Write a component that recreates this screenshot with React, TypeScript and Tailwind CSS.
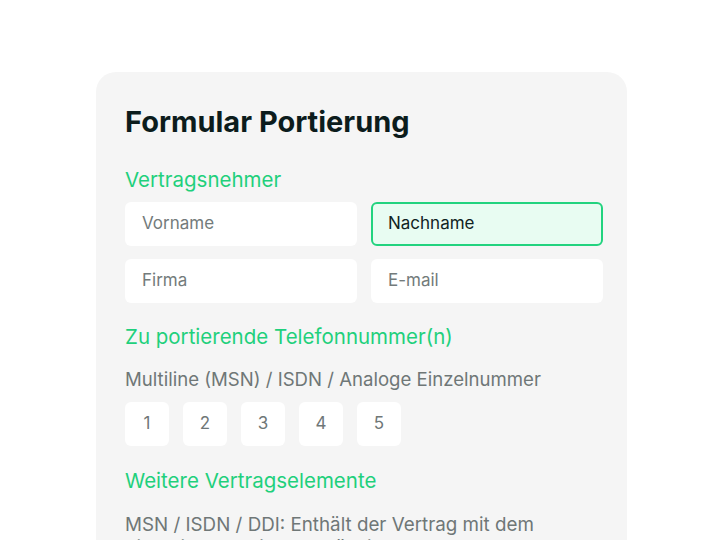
import React from 'react';

const Field: React.FC<{ label: string; active?: boolean }> = ({ label, active }) => (
  <div
    className={
      active
        ? 'flex h-[44px] items-center rounded-[6px] border-2 border-[#22d37f] bg-[#e8fcf2] px-[15px] text-[17px] text-[#102323]'
        : 'flex h-[44px] items-center rounded-[6px] bg-white px-[17px] text-[17px] text-[#737b7b]'
    }
  >
    {label}
  </div>
);

export default function App() {
  return (
    <div className="min-h-screen w-full bg-white pt-[72px] font-['Inter',sans-serif]">
      <div className="ml-[96px] h-[500px] w-[531px] rounded-[20px] bg-[#f5f5f5] pl-[29px] pr-[24px] pt-[32px]">
        <h1 className="text-[29px] font-bold leading-[36px] tracking-normal text-[#0c1c1c]">
          Formular Portierung
        </h1>

        <h2 className="mt-[27px] text-[20.5px] font-normal leading-[26px] text-[#1fd07c]">Vertragsnehmer</h2>
        <div className="mt-[9px] grid grid-cols-2 gap-x-[14px] gap-y-[13px]">
          <Field label="Vorname" />
          <Field label="Nachname" active />
          <Field label="Firma" />
          <Field label="E-mail" />
        </div>

        <h2 className="mt-[21px] text-[20.5px] font-normal leading-[26px] text-[#1fd07c]">
          Zu portierende Telefonnummer(n)
        </h2>
        <p className="mt-[17px] text-[18.6px] leading-[24px] text-[#6f7777]">
          Multiline (MSN) / ISDN / Analoge Einzelnummer
        </p>
        <div className="mt-[11px] flex gap-[14px]">
          {['1', '2', '3', '4', '5'].map((n) => (
            <div
              key={n}
              className="flex h-[44px] w-[44px] items-center justify-center rounded-[6px] bg-white text-[17px] text-[#6f7777]"
            >
              {n}
            </div>
          ))}
        </div>

        <h2 className="mt-[22px] text-[20.5px] font-normal leading-[26px] text-[#1fd07c]">
          Weitere Vertragselemente
        </h2>
        <p className="mt-[19px] w-[440px] text-[18.8px] leading-[23px] text-[#6f7777]">
          MSN / ISDN / DDI: Enthält der Vertrag mit dem bisherigen Anbieter zusätzliche Nummern und
          Durchwahlen, geben Sie diese bitte ebenfalls an.
        </p>
      </div>
    </div>
  );
}
